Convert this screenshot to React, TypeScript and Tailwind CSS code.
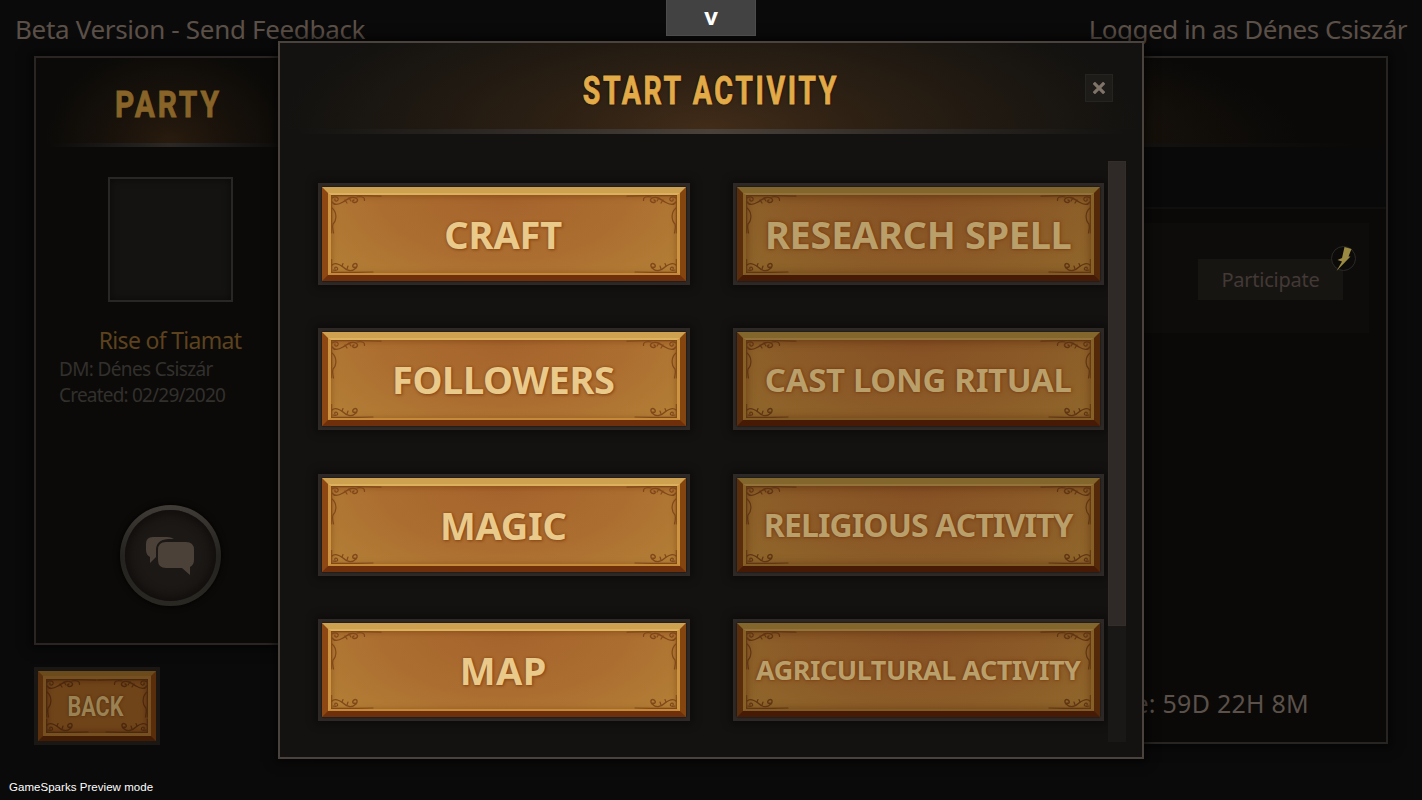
import clsx from 'clsx'

const ACTIVITIES = [
  { label: 'CRAFT', text: 'text-[38px] tracking-[-0.1px]', enabled: true },
  { label: 'RESEARCH SPELL', text: 'text-[38px] tracking-[-0.35px]', enabled: false },
  { label: 'FOLLOWERS', text: 'text-[38px] tracking-[-0.4px]', enabled: true },
  { label: 'CAST LONG RITUAL', text: 'text-[33px] tracking-[-0.35px]', enabled: false },
  { label: 'MAGIC', text: 'text-[38px] tracking-[-0.3px]', enabled: true },
  { label: 'RELIGIOUS ACTIVITY', text: 'text-[32px] tracking-[-0.9px]', enabled: false },
  { label: 'MAP', text: 'text-[38px] tracking-[0.4px]', enabled: true },
  { label: 'AGRICULTURAL ACTIVITY', text: 'text-[27px] tracking-[-0.5px]', enabled: false },
]

function TopCorner({ className }: { className?: string }) {
  return (
    <svg viewBox="0 0 52 42" className={clsx('absolute h-[42px] w-[52px]', className)} fill="none" stroke="currentColor" strokeLinecap="round">
      <path d="M0 .7H30L50 1.2" strokeWidth="1.2" />
      <path d="M.7 0V38" strokeWidth="1" />
      <path d="M1 7C3 10 7 10 12 7C17 4 20 1 25 3C28 5 26 8 23 7.5C21 7 21.500 5 23 5" strokeWidth="1.4" />
      <path d="M1 3C4 1 8 2 7 5C6 7 3 6 4 4M14 5L16 8M18 3L20 6M26 2C30 1 34 2 33.500 5.500" strokeWidth="1.2" />
      <path d="M1 13C6 17 6 25 2 29C1 32 2 35 2.500 38" strokeWidth="1.2" />
    </svg>
  )
}

function BottomCorner({ className }: { className?: string }) {
  return (
    <svg viewBox="0 0 44 14" className={clsx('absolute h-[14px] w-[44px]', className)} fill="none" stroke="currentColor" strokeLinecap="round">
      <path d="M0 13.300H26L42 13" strokeWidth="1.2" />
      <path d="M.7 0V14" strokeWidth="1" />
      <path d="M1 6C4 3 8 5 12 8C16 12 21 13 25 9C28 5 24 3 22 6C21 8 23 9 24 8" strokeWidth="1.4" />
      <path d="M2 11C5 12 8 11 6 8.500C5 7.500 3 8.500 4 10M11 7L12 4.500M16 10L17 7" strokeWidth="1.2" />
    </svg>
  )
}

function Ornaments() {
  return (
    <>
      <TopCorner className="top-0 left-0" />
      <TopCorner className="top-0 right-0 -scale-x-100" />
      <BottomCorner className="bottom-0 left-0" />
      <BottomCorner className="right-0 bottom-0 -scale-x-100" />
    </>
  )
}

function ActivityButton({ label, text, enabled }: { label: string; text: string; enabled: boolean }) {
  return (
    <button className="block h-[102px] w-full border-4 border-[#2e2926] shadow-[0_0_8px_3px_rgba(0,0,0,0.35)]">
      <div
        className={clsx(
          'h-full border-6 shadow-[0_0_2px_rgba(8,6,4,0.9)]',
          enabled
            ? 'border-t-[#cda150] border-r-[#85450f] border-b-[#6f2f0a] border-l-[#8c4713]'
            : 'border-t-[#82662b] border-r-[#54290a] border-b-[#461a05] border-l-[#5a2e0c]',
        )}
      >
        <div
          className={clsx(
            'h-full border-x-[3px] border-y-2',
            enabled ? 'border-[#cd9542] border-t-[#dbb15d] border-b-[#c58a38]' : 'border-[#876026] border-t-[#93733a] border-b-[#805c24]',
          )}
        >
          <div
            className={clsx(
              'relative flex h-full items-center justify-center overflow-hidden',
              enabled
                ? 'bg-[radial-gradient(ellipse_65%_150%_at_50%_0%,#a5632c_0%,#ac6e30_55%,#b37f36_100%)] text-[#80481a] shadow-[inset_0_1px_6px_rgba(110,50,8,0.5)]'
                : 'bg-[radial-gradient(ellipse_65%_150%_at_50%_0%,#865125_0%,#8b5a27_55%,#90672b_100%)] text-[#5f3513] shadow-[inset_0_1px_10px_rgba(80,34,6,0.6)]',
            )}
          >
            <Ornaments />
            <span
              className={clsx(
                'relative leading-none font-bold whitespace-nowrap',
                text,
                enabled
                  ? 'pr-px text-[#e9ca8b] [text-shadow:0_0_3px_#8c4a18,1px_1px_3px_#8c4a18]'
                  : 'text-[#b9a06b] [text-shadow:0_0_2px_#7b3c12,0_0_4px_#7b3c12]',
              )}
            >
              {label}
            </span>
          </div>
        </div>
      </div>
    </button>
  )
}

function PartyPanel() {
  return (
    <section className="h-[589px] w-[272px] border-2 border-[#2a2522] bg-[#0b0a08] shadow-[0_0_10px_4px_rgba(0,0,0,0.5)]">
      <div className="flex h-[85px] items-center justify-center bg-[radial-gradient(ellipse_125px_100px_at_50%_100%,#291b0e_0%,#19120b_45%,#0b0a08_100%)] pt-2">
        <h2 className="scale-x-[.81] pr-[4px] font-[Roboto] text-[37px] leading-[44px] font-bold tracking-[3.500px] text-[#886428] [-webkit-text-stroke:0.8px_#886428]">PARTY</h2>
      </div>
      <div className="mx-3 h-1 bg-[linear-gradient(90deg,transparent,#2b2826_50%,transparent)]" />
      <div className="mx-auto mt-[30px] h-[125px] w-[125px] border-2 border-[#292725] bg-[#141311] shadow-[inset_0_0_8px_rgba(0,0,0,0.5)]" />
      <p className="mt-[23px] text-center text-[23px] leading-[30px] tracking-[-0.7px] text-[#5d421f]">Rise of Tiamat</p>
      <div className="mt-px pl-[23px] text-[19px] leading-[26px] text-[#32302d]">
        <p className="tracking-[-0.65px]">DM: Dénes Csiszár</p>
        <p className="tracking-[-0.8px]">Created: 02/29/2020</p>
      </div>
      <div className="mx-auto mt-[97px] flex h-[101px] w-[101px] items-center justify-center rounded-full bg-[linear-gradient(#403b37,#24231f_50%,#292823)] p-[5px] shadow-[0_0_6px_#000]">
        <div className="flex h-full w-full items-center justify-center rounded-full bg-[#1c1815] shadow-[inset_0_0_8px_4px_#110e0d]">
          <svg viewBox="0 0 50 40" className="h-10 w-[50px]" fill="#4b4138">
            <path d="M8 1H22Q26 1 29 3H23Q11 4 11 14V21L5 27V21Q1 19 1 14V8Q1 1 8 1Z" />
            <path d="M21 6H41Q49 6 49 14V24Q49 29 45 31V39L37 32H21Q13 32 13 24V14Q13 6 21 6Z" />
          </svg>
        </div>
      </div>
    </section>
  )
}

function DowntimePanel() {
  return (
    <section className="flex h-[688px] flex-1 flex-col border-2 border-[#282421] bg-[#0a0908] shadow-[0_0_10px_4px_rgba(0,0,0,0.5)]">
      <div className="h-[85px] bg-[radial-gradient(ellipse_450px_120px_at_50%_100%,#291a0e_0%,#120e09_75%,#0a0908_100%)]" />
      <div className="mx-7 h-1 bg-[linear-gradient(90deg,transparent,#201e1c_50%,transparent)]" />
      <div className="h-[62px] border-b-2 border-[#100f0e] bg-[#0a090a]" />
      <div className="mx-[17px] mt-[14px] flex h-[110px] justify-end bg-[#0d0c0a] pt-[36px] pr-[26px]">
        <div className="relative flex h-[41px] w-[145px] items-center justify-center bg-[#161512] pt-px text-[20px] tracking-[-0.25px] text-[#433935]">
          Participate
          <div className="absolute -top-[13px] -right-[13px] flex h-[25px] w-[25px] items-center justify-center rounded-full border border-[#2c2a27] bg-[#0c0b09]">
            <svg viewBox="0 0 16 24" className="h-6 w-4 shrink-0" fill="#9a8a42">
              <path d="M8.500 0L15.500 2L12.500 9.500H14.500L.5 24L6 14.500L1.500 13L6 11Z" />
            </svg>
          </div>
        </div>
      </div>
      <p className="mt-auto pr-[77px] pb-[21px] text-right text-[25px] leading-[36px] tracking-[0.25px] text-[#5b514a]">Free time: 59D 22H 8M</p>
    </section>
  )
}

function BackButton() {
  return (
    <button className="-mb-px h-[78px] w-[126px] border-4 border-[#1a1715]">
      <div className="h-full border-[5px] border-t-[#6b4b1c] border-r-[#5b2e0b] border-b-[#431c05] border-l-[#5a300d]">
        <div className="h-full border-[3px] border-[#765021]">
          <div className="relative flex h-full items-center justify-center overflow-hidden bg-[#704419] text-[#4a280e] shadow-[inset_0_0_6px_#46230c]">
            <Ornaments />
            <span className="relative scale-x-[.8] pt-[3px] pr-[5px] font-[Roboto] text-[27px] leading-none font-bold text-[#9a8253] [text-shadow:0_0_3px_#4b250b]">BACK</span>
          </div>
        </div>
      </div>
    </button>
  )
}

function StartActivityDialog() {
  return (
    <div className="absolute top-[41px] left-[278px] h-[718px] w-[866px] border-2 border-[#4a423c] bg-[#131210] shadow-[0_0_10px_3px_rgba(0,0,0,0.6)]">
      <header className="relative flex h-[86px] items-center justify-center bg-[radial-gradient(ellipse_430px_150px_at_50%_100%,#422c19_0%,#302214_30%,#1c1711_75%,#131210_100%)] pt-[10px]">
        <h1 className="scale-x-[.75] font-[Roboto] text-[38px] leading-[44px] font-bold tracking-[3.500px] whitespace-nowrap text-[#e3aa48] [-webkit-text-stroke:0.8px_#e3aa48] [text-shadow:0_0_3px_#000]">START ACTIVITY</h1>
        <button className="absolute top-[31px] right-[29px] flex h-[28px] w-[28px] items-center justify-center border border-[#262421] bg-[#1d1c19]">
          <svg viewBox="0 0 12 12" className="h-3 w-3" stroke="#807468" strokeWidth="3.200">
            <path d="M.8 .8L11.200 11.200M11.200 .8L.8 11.200" />
          </svg>
        </button>
      </header>
      <div className="mx-4 h-[5px] bg-[linear-gradient(90deg,transparent,#4a413a_50%,transparent)]" />
      <div className="mt-[27px] flex h-[581px] pl-[38px]">
        <div className="grid w-[786px] grid-cols-2 content-start gap-x-[43px] gap-y-[43.3px] pt-[22px]">
          {ACTIVITIES.map((activity) => (
            <ActivityButton key={activity.label} {...activity} />
          ))}
        </div>
        <div className="ml-1 w-[18px] bg-[#191816]">
          <div className="h-[465px] border border-[#332e2a] bg-[#2f2a27]" />
        </div>
      </div>
    </div>
  )
}

export default function App() {
  return (
    <div className="relative h-[800px] w-[1422px] overflow-hidden bg-[#0b0a0b] font-['Noto_Sans',sans-serif]">
      <header className="flex h-[56px] items-start justify-between px-[15px] pt-[11px] text-[26px] leading-[36px] text-[#5b5048]">
        <span className="tracking-[-0.32px]">Beta Version - Send Feedback</span>
        <span className="tracking-[-0.5px]">Logged in as Dénes Csiszár</span>
      </header>
      <main className="flex h-[688px] items-start gap-3 pr-[34px] pl-[34px]">
        <div className="flex h-full flex-col justify-between">
          <PartyPanel />
          <BackButton />
        </div>
        <DowntimePanel />
      </main>
      <StartActivityDialog />
      <div className="absolute top-0 left-[666px] flex h-[36px] w-[90px] items-start justify-center border border-t-0 border-[#4c4c4c] bg-[#424242] font-['Open_Sans'] text-[24px] leading-[32px] font-bold text-white">v</div>
      <div className="absolute bottom-[6px] left-[9px] font-['Liberation_Sans'] text-[11.5px] leading-[14px] tracking-[0.04px] text-white">GameSparks Preview mode</div>
    </div>
  )
}
